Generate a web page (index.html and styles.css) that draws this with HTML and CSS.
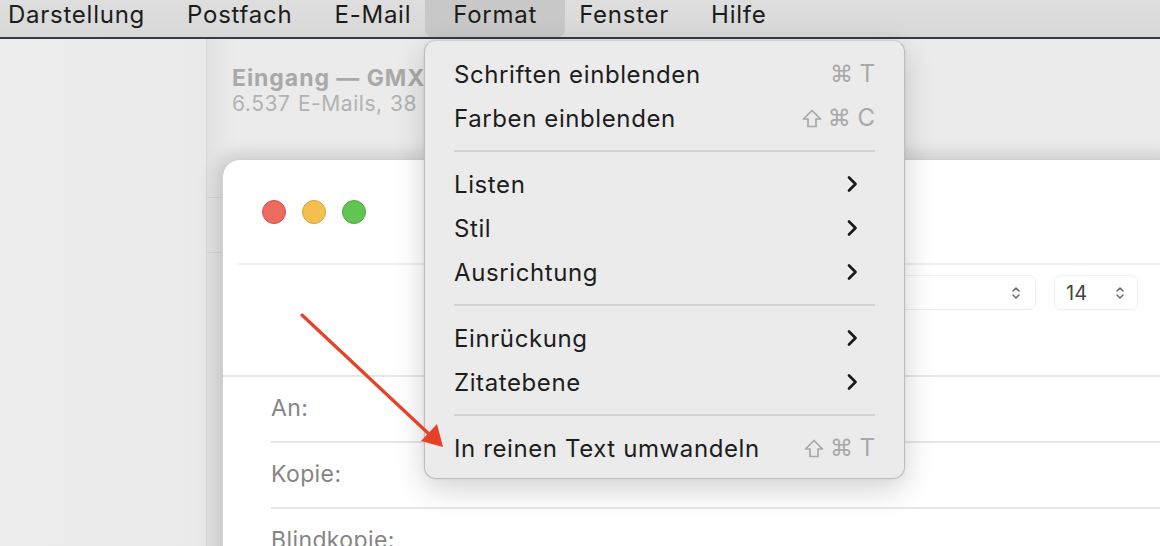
FILE: index.html
```html
<!DOCTYPE html>
<html lang="de">
<head>
<meta charset="utf-8">
<title>Mail – Format</title>
<link rel="stylesheet" href="styles.css">
</head>
<body>
<nav class="menubar">
  <span class="mb-item mb-first">Darstellung</span>
  <span class="mb-item">Postfach</span>
  <span class="mb-item">E-Mail</span>
  <span class="mb-item mb-active">Format</span>
  <span class="mb-item">Fenster</span>
  <span class="mb-item">Hilfe</span>
</nav>

<main class="desktop">
  <aside class="sidebar"></aside>
  <section class="mailpane">
    <header class="pane-head">
      <h1 class="pane-title">Eingang — GMX</h1>
      <p class="pane-sub">6.537 E-Mails, 38 ungelesen</p>
    </header>
    <div class="pane-list">
      <div class="pane-row"></div>
    </div>
  </section>
</main>

<section class="compose">
  <div class="titlebar">
    <span class="light light-red"></span>
    <span class="light light-yellow"></span>
    <span class="light light-green"></span>
  </div>
  <div class="toolbar">
    <div class="select select-font">
      <svg class="updown" viewBox="0 0 10 16" width="10" height="16"><path d="M2 6 L5 3 L8 6 M2 10 L5 13 L8 10" fill="none" stroke="#6e6e6e" stroke-width="1.6" stroke-linecap="round" stroke-linejoin="round"/></svg>
    </div>
    <div class="select select-size">
      <span class="select-value">14</span>
      <svg class="updown" viewBox="0 0 10 16" width="10" height="16"><path d="M2 6 L5 3 L8 6 M2 10 L5 13 L8 10" fill="none" stroke="#6e6e6e" stroke-width="1.6" stroke-linecap="round" stroke-linejoin="round"/></svg>
    </div>
  </div>
  <div class="fields">
    <div class="field"><span class="field-label">An:</span></div>
    <div class="field"><span class="field-label">Kopie:</span></div>
    <div class="field"><span class="field-label">Blindkopie:</span></div>
  </div>
</section>

<div class="menu">
  <div class="menu-row"><span class="menu-label">Schriften einblenden</span><span class="shortcut"><span class="key">⌘</span><span class="key key-letter">T</span></span></div>
  <div class="menu-row"><span class="menu-label">Farben einblenden</span><span class="shortcut"><svg class="shift" viewBox="0 0 20 19" width="20" height="19" aria-label="Umschalt"><path d="M10 1.5 L18.5 10 L14 10 L14 17.5 L6 17.5 L6 10 L1.5 10 Z" fill="none" stroke="#a8a8a8" stroke-width="1.7" stroke-linejoin="round"/></svg><span class="key">⌘</span><span class="key key-letter">C</span></span></div>
  <div class="menu-sep"></div>
  <div class="menu-row"><span class="menu-label">Listen</span><svg class="chev" viewBox="0 0 12 18" width="12" height="18"><path d="M3 2.5 L9.5 9 L3 15.5" fill="none" stroke="#1a1a1a" stroke-width="2.7" stroke-linecap="round" stroke-linejoin="round"/></svg></div>
  <div class="menu-row"><span class="menu-label">Stil</span><svg class="chev" viewBox="0 0 12 18" width="12" height="18"><path d="M3 2.5 L9.5 9 L3 15.5" fill="none" stroke="#1a1a1a" stroke-width="2.7" stroke-linecap="round" stroke-linejoin="round"/></svg></div>
  <div class="menu-row"><span class="menu-label">Ausrichtung</span><svg class="chev" viewBox="0 0 12 18" width="12" height="18"><path d="M3 2.5 L9.5 9 L3 15.5" fill="none" stroke="#1a1a1a" stroke-width="2.7" stroke-linecap="round" stroke-linejoin="round"/></svg></div>
  <div class="menu-sep"></div>
  <div class="menu-row"><span class="menu-label">Einrückung</span><svg class="chev" viewBox="0 0 12 18" width="12" height="18"><path d="M3 2.5 L9.5 9 L3 15.5" fill="none" stroke="#1a1a1a" stroke-width="2.7" stroke-linecap="round" stroke-linejoin="round"/></svg></div>
  <div class="menu-row"><span class="menu-label">Zitatebene</span><svg class="chev" viewBox="0 0 12 18" width="12" height="18"><path d="M3 2.5 L9.5 9 L3 15.5" fill="none" stroke="#1a1a1a" stroke-width="2.7" stroke-linecap="round" stroke-linejoin="round"/></svg></div>
  <div class="menu-sep"></div>
  <div class="menu-row"><span class="menu-label">In reinen Text umwandeln</span><span class="shortcut"><svg class="shift" viewBox="0 0 20 19" width="20" height="19" aria-label="Umschalt"><path d="M10 1.5 L18.5 10 L14 10 L14 17.5 L6 17.5 L6 10 L1.5 10 Z" fill="none" stroke="#a8a8a8" stroke-width="1.7" stroke-linejoin="round"/></svg><span class="key">⌘</span><span class="key key-letter">T</span></span></div>
</div>

<svg class="arrow" viewBox="0 0 1160 546" width="1160" height="546">
  <line x1="302" y1="315" x2="430" y2="435" stroke="#e8412a" stroke-width="3.2" stroke-linecap="round"/>
  <polygon points="443,447 421,441 437,424" fill="#e8412a"/>
</svg>
</body>
</html>
```

FILE: styles.css
```css
* { box-sizing: border-box; }

html, body {
  margin: 0;
  padding: 0;
  width: 1160px;
  height: 546px;
  overflow: hidden;
  background: #ececec;
  font-family: Inter, "Liberation Sans", Arial, sans-serif;
  position: relative;
}

/* ---------- menu bar ---------- */
.menubar {
  height: 39px;
  display: flex;
  align-items: flex-start;
  background: linear-gradient(#dedede, #d8d8d8);
  border-bottom: 2px solid #333a48;
  font-size: 24px;
  letter-spacing: 0.75px;
  color: #1c1c1c;
}

.mb-item {
  height: 37px;
  line-height: 30px;
  padding: 0 21px;
}

.mb-first { margin-left: -13px; }

.mb-active {
  padding: 0 28px;
  margin: 0 -7px;
  background: #c8c8c8;
  border-radius: 0 0 7px 7px;
}

/* ---------- background window ---------- */
.desktop {
  display: flex;
  height: 507px;
}

.sidebar {
  width: 207px;
  flex: none;
  background: linear-gradient(90deg, #ededed, #eaeaea);
  border-right: 1px solid #d8d8d8;
}

.mailpane {
  flex: 1;
  background: linear-gradient(90deg, #e2e2e2, #ebebeb 30px);
}

.pane-head {
  padding: 25px 0 0 25px;
  height: 159px;
  border-bottom: 1px solid #d6d6d6;
}

.pane-title {
  margin: 0;
  font-size: 23px;
  font-weight: 700;
  letter-spacing: 0.95px;
  color: #a9a9a9;
  line-height: 28px;
  white-space: nowrap;
}

.pane-sub {
  margin: 0;
  font-size: 21px;
  letter-spacing: 0.55px;
  word-spacing: 1px;
  color: #b2b2b2;
  line-height: 24px;
  white-space: nowrap;
}

.pane-row {
  height: 55px;
  border-bottom: 1px solid #d6d6d6;
}

/* ---------- compose window ---------- */
.compose {
  position: absolute;
  left: 222px;
  top: 159px;
  width: 960px;
  height: 420px;
  background: #ffffff;
  border-top-left-radius: 18px;
  border: 1px solid #cfcfcf;
  box-shadow: -6px 0 22px rgba(0, 0, 0, 0.10), 0 -4px 18px rgba(0, 0, 0, 0.08);
}

.titlebar {
  height: 105px;
  margin-left: 15px;
  border-bottom: 2px solid #efefef;
  display: flex;
  align-items: flex-start;
  gap: 16px;
  padding: 40px 0 0 24px;
}

.light {
  width: 24px;
  height: 24px;
  border-radius: 50%;
}

.light-red { background: #ec6a5e; border: 1px solid #d55246; }
.light-yellow { background: #f4bf4f; border: 1px solid #d9a33a; }
.light-green { background: #61c554; border: 1px solid #4aa93d; }

.toolbar {
  height: 112px;
  border-bottom: 2px solid #e6e6e6;
  display: flex;
  justify-content: flex-end;
  align-items: flex-start;
  gap: 18px;
  padding: 10px 0 0;
}

.select {
  height: 35px;
  border: 1.5px solid #efefef;
  border-radius: 7px;
  display: flex;
  align-items: center;
  justify-content: space-between;
  padding: 0 12px 0 11px;
}

.select-font { width: 290px; justify-content: flex-end; padding-right: 14px; }
.select-size { width: 84px; margin-right: 43px; }

.select-value {
  font-size: 20px;
  color: #444444;
}

.fields {
  padding-left: 48px;
}

.field {
  height: 66px;
  border-bottom: 2px solid #e6e6e6;
  display: flex;
  align-items: center;
  padding-bottom: 2px;
}

.field-label {
  font-size: 23px;
  letter-spacing: 0.4px;
  color: #858585;
}

/* ---------- dropdown menu ---------- */
.menu {
  position: absolute;
  left: 424px;
  top: 40px;
  width: 481px;
  height: 439px;
  padding: 11px 29px 0 29px;
  background: #ebebeb;
  border: 1px solid #bdbdbd;
  border-top-color: #d0d0d0;
  border-radius: 12px;
  box-shadow: 0 10px 30px rgba(0, 0, 0, 0.18), 0 0 3px rgba(0, 0, 0, 0.08);
  color: #1d1d1d;
}

.menu-row {
  height: 44px;
  display: flex;
  align-items: center;
  justify-content: space-between;
  font-size: 24px;
  letter-spacing: 0.6px;
}

.shortcut {
  display: flex;
  align-items: center;
  gap: 6px;
  color: #a8a8a8;
}

.key {
  font-family: "DejaVu Sans", Inter, sans-serif;
  font-size: 23px;
  line-height: 24px;
}

.key-letter {
  font-family: Inter, "Liberation Sans", sans-serif;
  font-size: 24px;
  letter-spacing: 0;
}

.shift { margin-right: 0; }

.chev { margin-right: 17px; }

.menu-sep {
  height: 22px;
  display: flex;
  align-items: center;
}

.menu-sep::before {
  content: "";
  flex: 1;
  height: 2px;
  background: #d3d3d3;
}

/* ---------- annotation arrow ---------- */
.arrow {
  position: absolute;
  left: 0;
  top: 0;
  pointer-events: none;
}
```
